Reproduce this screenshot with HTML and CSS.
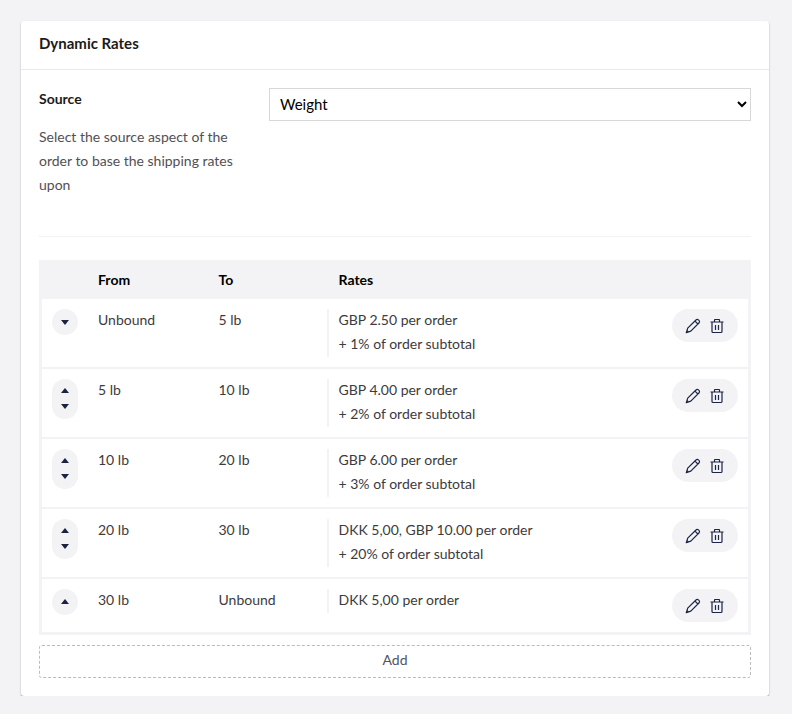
FILE: index.html
```html
<!DOCTYPE html>
<html lang="en"><head><meta charset="utf-8"><title>Dynamic Rates</title><link rel="stylesheet" href="styles.css"></head>
<body>
<svg class="defs"><defs>
<symbol id="edit" viewBox="0 0 16 16"><path d="M1.3 14.7l1.4-4.6 8-7.9q1.4-1.3 2.8-.3 1.8 1.4.4 3.1l-8.1 8.1zM10 3.1l2.9 2.9M2 12.5l1.5 1.5"/></symbol>
<symbol id="trash" viewBox="0 0 16 16"><path d="M1.5 4h13M5.5 4v-2q0-.5.5-.5h4q.5 0 .5.5v2M3 4v9.5q0 1 1 1h8q1 0 1-1v-9.5M6.5 7v5M9.5 7v5"/></symbol>
</defs></svg>
<main class="box">
<h1 class="box-title">Dynamic Rates</h1>
<div class="box-body">
<div class="property"><div class="info"><label for="source">Source</label><p>Select the source aspect of the order to base the shipping rates upon</p></div>
<select id="source"><option>Weight</option></select></div>
<div class="table">
<div class="row head"><span></span><span>From</span><span>To</span><span class="rates">Rates</span><span></span></div>
<div class="rows">
<div class="row"><div class="sort single first"><i class="down"></i></div><span>Unbound</span><span>5 lb</span><div class="rates"><p>GBP 2.50 per order<br>+ 1% of order subtotal</p></div><div class="actions"><svg><use href="#edit"/></svg><svg><use href="#trash"/></svg></div></div>
<div class="row"><div class="sort"><i class="up"></i><i class="down"></i></div><span>5 lb</span><span>10 lb</span><div class="rates"><p>GBP 4.00 per order<br>+ 2% of order subtotal</p></div><div class="actions"><svg><use href="#edit"/></svg><svg><use href="#trash"/></svg></div></div>
<div class="row"><div class="sort"><i class="up"></i><i class="down"></i></div><span>10 lb</span><span>20 lb</span><div class="rates"><p>GBP 6.00 per order<br>+ 3% of order subtotal</p></div><div class="actions"><svg><use href="#edit"/></svg><svg><use href="#trash"/></svg></div></div>
<div class="row"><div class="sort"><i class="up"></i><i class="down"></i></div><span>20 lb</span><span>30 lb</span><div class="rates"><p>DKK 5,00, GBP 10.00 per order<br>+ 20% of order subtotal</p></div><div class="actions"><svg><use href="#edit"/></svg><svg><use href="#trash"/></svg></div></div>
<div class="row"><div class="sort single"><i class="up"></i></div><span>30 lb</span><span>Unbound</span><div class="rates"><p>DKK 5,00 per order</p></div><div class="actions"><svg><use href="#edit"/></svg><svg><use href="#trash"/></svg></div></div>
</div></div>
<button class="add">Add</button>
</div></main>
</body></html>
```
FILE: styles.css
```css
* { box-sizing: border-box; }
body { margin: 0; padding: 21px 23px 0 21px; background: #f3f3f5; font: 14px/24px Lato, sans-serif; color: #3c3b3e; }
.defs { display: none; }
.box { height: 675px; background: #fff; border-radius: 3px; box-shadow: 0 1px 1px rgba(0,0,0,.18), 0 1px 2px rgba(0,0,0,.24); }
.box-title { height: 49px; margin: 0; padding: 10px 18px; border-bottom: 1px solid #e9e9eb; font-size: 15px; line-height: 24px; font-weight: 700; color: #1b1b1b; }
.box-body { padding: 18px; }
.property { display: grid; grid-template-columns: 210px 1fr; column-gap: 20px; height: 149px; border-bottom: 1px solid #f3f3f5; }
.info { margin-top: -1px; }
.info label { display: block; font-weight: 700; color: #1b1b1b; }
.info p { margin: 14px 0 0; color: #515054; }
select { width: 100%; height: 33px; padding: 0 6px 2px; border: 1px solid #d8d7d9; border-radius: 0; background: #fff; color: #000; font: 15px Lato, sans-serif; }
.table { margin-top: 23px; }
.row { display: grid; grid-template-columns: 56px 120.5px 108.5px 1fr 76px; align-items: start; height: 70px; padding-top: 9px; border-bottom: 2px solid #f3f3f5; }
.row:last-child { height: 53px; border: 0; }
.head { height: 39px; padding: 8px 3px; border: 0; background: #f3f3f5; color: #000; font-weight: 700; }
.rows { border: 3px solid #f3f3f5; border-top: 0; }
.rates { padding-left: 9.5px; border-left: 2px solid #f3f3f5; }
.rows .rates { margin-top: 1px; }
.rates p { margin: -1px 0 1px; }
.sort { display: flex; flex-direction: column; align-items: center; justify-content: center; gap: 11px; width: 26px; height: 40px; margin: 1px 0 0 10px; padding-bottom: 1px; border-radius: 13px; background: #f3f3f5; }
.single { height: 26px; }
.first { padding: 1px 0 0; }
.up, .down { width: 0; height: 0; border: 0 solid transparent; border-left-width: 4.5px; border-right-width: 4.5px; }
.up { border-bottom: 5px solid #1b2340; }
.down { border-top: 5px solid #1b2340; }
.actions { display: flex; align-items: center; justify-content: center; gap: 8px; width: 66px; height: 33px; margin-top: 1px; border-radius: 17px; background: #f3f3f5; }
.actions svg { width: 16px; height: 16px; fill: none; stroke: #1b2347; stroke-width: 1.2; stroke-linejoin: round; }
.add { display: block; width: 100%; height: 33px; margin-top: 10px; padding: 0 0 4px; border: 1px dashed #bbbabf; border-radius: 3px; background: #fff; color: #515464; font: 14px Lato, sans-serif; }
```
